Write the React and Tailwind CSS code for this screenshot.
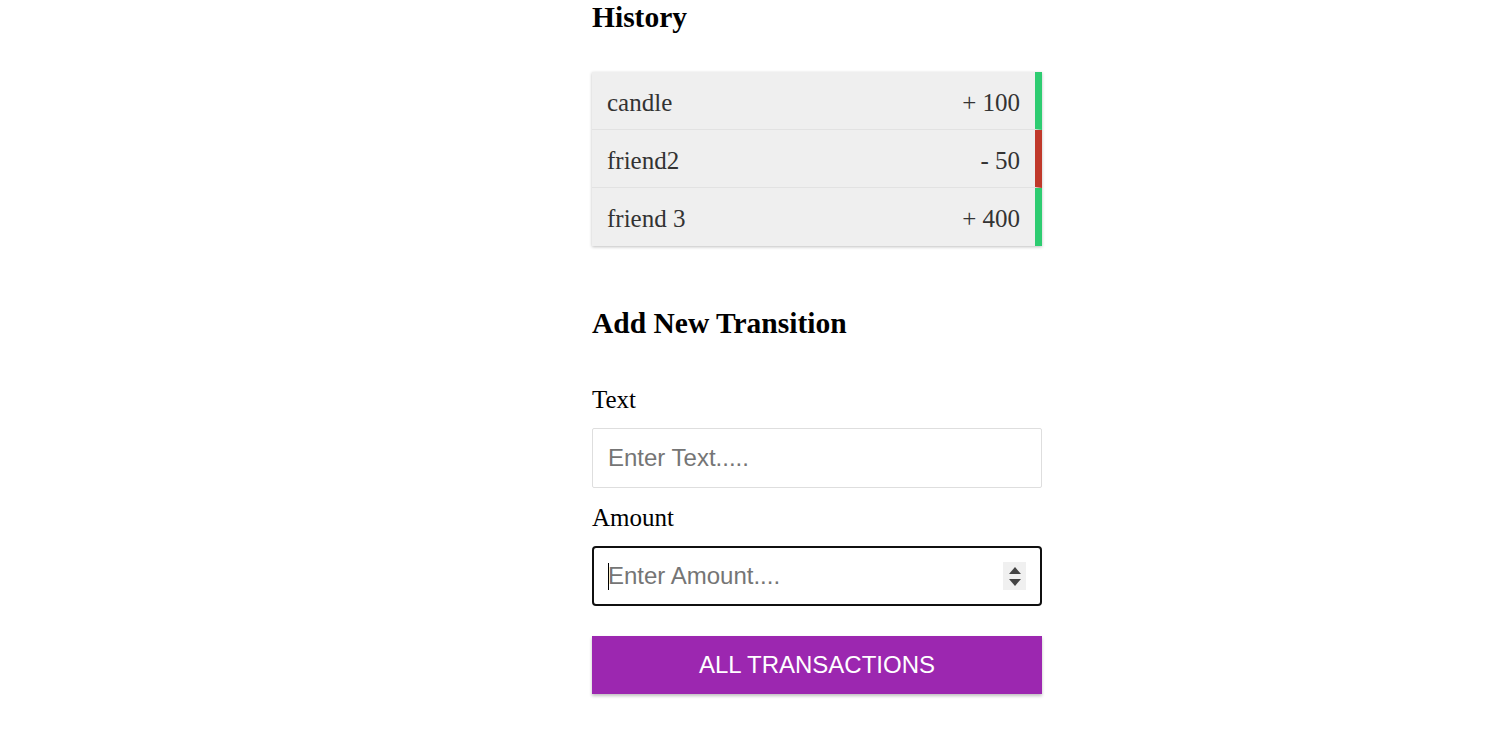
import React from 'react';

const history = [
  { text: 'candle', amount: '+ 100', plus: true },
  { text: 'friend2', amount: '- 50', plus: false },
  { text: 'friend 3', amount: '+ 400', plus: true },
];

export default function App() {
  return (
    <div className="min-h-screen bg-white font-['Liberation_Serif',serif]">
      <div className="ml-[592px] w-[450px]">
        <h3 className="text-[29.5px] leading-[34px] font-bold text-black">History</h3>

        <ul className="mt-[38px] shadow-[0_1px_3px_rgba(0,0,0,0.25)]">
          {history.map((item, i) => (
            <li
              key={i}
              className={
                'flex h-[58px] items-center justify-between bg-[#efefef] pt-[4px] pl-[15px] pr-[15px] text-[25px] text-[#333] border-r-[7px] ' +
                (item.plus ? 'border-r-[#2ecc71] ' : 'border-r-[#c0392b] ') +
                (i < history.length - 1 ? 'border-b border-b-[#e2e2e2]' : '')
              }
            >
              <span>{item.text}</span>
              <span>{item.amount}</span>
            </li>
          ))}
        </ul>

        <h3 className="mt-[60px] text-[29.5px] leading-[34px] font-bold text-black">Add New Transition</h3>

        <form onSubmit={(e) => e.preventDefault()}>
          <label className="mt-[45px] block text-[25px] leading-[30px] text-black">Text</label>
          <input
            type="text"
            placeholder="Enter Text....."
            className="mt-[13px] block h-[60px] w-full rounded-[2px] border border-[#dedede] px-[15px] font-['Liberation_Sans',sans-serif] text-[24px] text-[#333] placeholder:text-[#757575] outline-none"
          />

          <label className="mt-[15px] block text-[25px] leading-[30px] text-black">Amount</label>
          <div className="relative mt-[13px]">
            <input
              type="text"
              inputMode="numeric"
              autoFocus
              placeholder="Enter Amount...."
              className="block h-[60px] w-full rounded-[4px] border-2 border-[#101010] px-[14px] font-['Liberation_Sans',sans-serif] text-[24px] text-[#333] caret-black placeholder:text-[#757575] outline-none"
            />
            {/* caret */}
            <div className="pointer-events-none absolute left-[16px] top-[17px] h-[27px] w-px bg-black" />
            <div className="absolute right-[16px] top-[16px] flex h-[28px] w-[23px] flex-col items-center justify-center gap-[5px] bg-[#f0f0f0]">
              <svg width="12" height="7" viewBox="0 0 12 7"><path d="M0 7 L6 0 L12 7 Z" fill="#444" /></svg>
              <svg width="12" height="7" viewBox="0 0 12 7"><path d="M0 0 L6 7 L12 0 Z" fill="#444" /></svg>
            </div>
          </div>

          <button
            type="submit"
            className="mt-[30px] block h-[58px] w-full bg-[#9c27b0] font-['Liberation_Sans',sans-serif] text-[24px] text-white shadow-[0_2px_3px_rgba(0,0,0,0.25)]"
          >
            ALL TRANSACTIONS
          </button>
        </form>
      </div>
    </div>
  );
}
